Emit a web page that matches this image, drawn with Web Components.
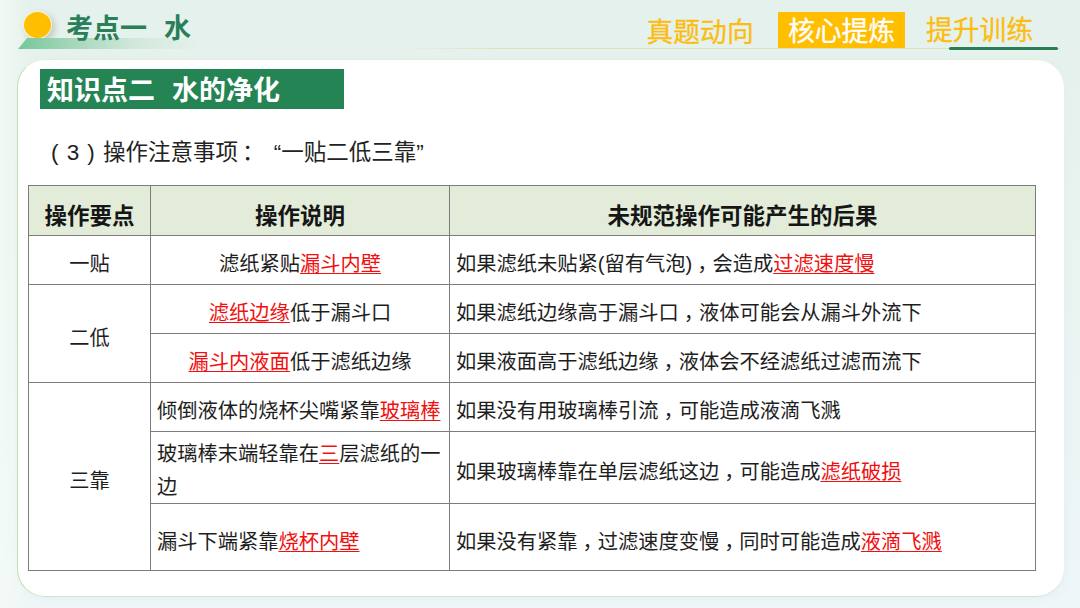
<!DOCTYPE html>
<html lang="zh"><head><meta charset="utf-8"><title>水的净化</title>
<style>
html,body{margin:0;padding:0;width:1080px;height:608px;overflow:hidden}
body{font-family:"Liberation Sans","Noto Sans CJK SC",sans-serif;background:linear-gradient(90deg,rgba(246,251,246,.75) 0,rgba(246,251,246,0) 30px),linear-gradient(180deg,#e5f1ec 0%,#e9f3ef 40%,#eef6f8 100%)}
.g{margin-left:17px}
.col{font-style:normal;font-feature-settings:"halt";padding:0 7px 0 4px}
.qu{margin-left:13.5px}
.lead{word-spacing:1.9px}
</style></head><body>
<lesson-slide>
  <lesson-header slot="header"></lesson-header>
  <section-title>知识点二<span class="g">水的净化</span></section-title>
  <lesson-note><span class="lead">( 3 ) 操作注意事项</span><i class="col">：</i><span class="qu">“一贴二低三靠”</span></lesson-note>
  <filter-table></filter-table>
</lesson-slide>
<script>
const el=(name,html)=>customElements.define(name,class extends HTMLElement{
  constructor(){super();this.attachShadow({mode:'open'}).innerHTML=html}
});
el('lesson-slide',`<style>
:host{display:flex;flex-direction:column;width:1080px;height:608px;box-sizing:border-box;padding-bottom:11px}
.card{flex:1;margin:0 16px 0 17px;background:#fff;border-radius:28px;box-sizing:border-box;padding:9px 28px 0 22px;
 border-left:1px solid #c3e0b4;border-top:1px solid #e2efd8;border-bottom:1px solid #cfe6c4;box-shadow:2px 2px 6px rgba(225,238,245,.7)}
</style><slot name="header"></slot><div class="card"><slot></slot></div>`);
el('lesson-header',`<style>
:host{display:flex;height:59px;flex:none;position:relative;box-sizing:border-box;font-family:"Liberation Sans","Noto Sans CJK SC",sans-serif}
.sun{position:absolute;left:23px;top:11px;width:29px;height:28px;box-sizing:border-box;border-radius:50%;background:#fdbf00;border:1px solid #fdf3d4;box-shadow:3px 3px 6px rgba(120,130,120,.35)}
.stripe{position:absolute;left:18px;top:38px;width:182px;height:11px;background:linear-gradient(90deg,#74c79b 0%,#9fd4b6 25%,#d3e8dc 65%,rgba(230,241,236,0) 100%);clip-path:polygon(5% 0,100% 0,100% 100%,0 100%)}
.title{position:absolute;left:66px;top:12px;margin:0;font-size:27px;line-height:34px;font-weight:700;color:#2a7f58;white-space:nowrap}
.title span{margin-left:17px}
.rule{position:absolute;left:400px;right:20px;top:48px;height:1px;background:linear-gradient(90deg,rgba(205,226,178,0),#d5e6bd 15%)}
nav{position:absolute;left:641px;top:12px;display:flex;align-items:flex-start;font-size:26.8px;color:#fbbd12;-webkit-text-stroke:.3px currentColor}
.tab{box-sizing:border-box;height:36px;line-height:43px;white-space:nowrap}
.a{width:137px;padding-left:5.5px}
.b{width:127px;text-align:center;background:#ffbe00;color:#fff;line-height:40px}
.c{padding-left:21px;line-height:38px;position:relative;width:155px}
.c::after{content:"";position:absolute;left:44px;top:35px;width:109px;height:3px;border-radius:2px;background:#2a7d54}
</style>
<span class="sun"></span><span class="stripe"></span>
<h1 class="title">考点一<span>水</span></h1><span class="rule"></span>
<nav><span class="tab a">真题动向</span><span class="tab b">核心提炼</span><span class="tab c">提升训练</span></nav>`);
el('section-title',`<style>
:host{display:block;width:304px;height:40px;box-sizing:border-box;background:#258453;color:#fff;font-weight:700;font-size:27px;line-height:45px;padding-left:7px;white-space:nowrap}
</style><slot></slot>`);
el('lesson-note',`<style>
:host{display:block;margin:24px 0 0 11px;height:52px;font-size:22.5px;line-height:40px;color:#222;white-space:nowrap}
</style><slot></slot>`);
const R=t=>`<u>${t}</u>`;
const C=`<i>，</i>`;
el('filter-table',`<style>
:host{display:block;margin-left:-12px;width:1007px;font-size:20.25px;color:#1e1e1e}
table{border-collapse:collapse;table-layout:fixed;width:1007px}
th,td{border:1px solid #7c7c7c;padding:9px 6px 0;line-height:33px;text-align:left;font-weight:400;box-sizing:border-box}
th{background:#e2ecd9;font-weight:700;font-size:22.5px;color:#161616;text-align:center;height:50px;padding-top:11px}
.c{text-align:center}
.w{padding-top:6px;line-height:32.5px}
.l td{padding-top:10px}
i{font-style:normal;font-feature-settings:"halt";padding:0 5px}
u{color:#f01010;text-decoration-thickness:1.3px;text-underline-offset:2px}
.h49{height:49px}.h72{height:72px}.h66{height:67px}
</style>
<table><colgroup><col style="width:122px"><col style="width:299px"><col style="width:586px"></colgroup>
<tr><th>操作要点</th><th>操作说明</th><th>未规范操作可能产生的后果</th></tr>
<tr class="h49"><td class="c">一贴</td><td class="c">滤纸紧贴${R('漏斗内壁')}</td><td>如果滤纸未贴紧(留有气泡)${C}会造成${R('过滤速度慢')}</td></tr>
<tr class="h49"><td class="c" rowspan="2">二低</td><td class="c">${R('滤纸边缘')}低于漏斗口</td><td>如果滤纸边缘高于漏斗口${C}液体可能会从漏斗外流下</td></tr>
<tr class="h49"><td class="c">${R('漏斗内液面')}低于滤纸边缘</td><td>如果液面高于滤纸边缘${C}液体会不经滤纸过滤而流下</td></tr>
<tr class="h49"><td class="c" rowspan="3">三靠</td><td>倾倒液体的烧杯尖嘴紧靠${R('玻璃棒')}</td><td>如果没有用玻璃棒引流${C}可能造成液滴飞溅</td></tr>
<tr class="h72"><td class="w">玻璃棒末端轻靠在${R('三')}层滤纸的一<br>边</td><td>如果玻璃棒靠在单层滤纸这边${C}可能造成${R('滤纸破损')}</td></tr>
<tr class="h66 l"><td>漏斗下端紧靠${R('烧杯内壁')}</td><td>如果没有紧靠${C}过滤速度变慢${C}同时可能造成${R('液滴飞溅')}</td></tr>
</table>`);
</script>
</body></html>
